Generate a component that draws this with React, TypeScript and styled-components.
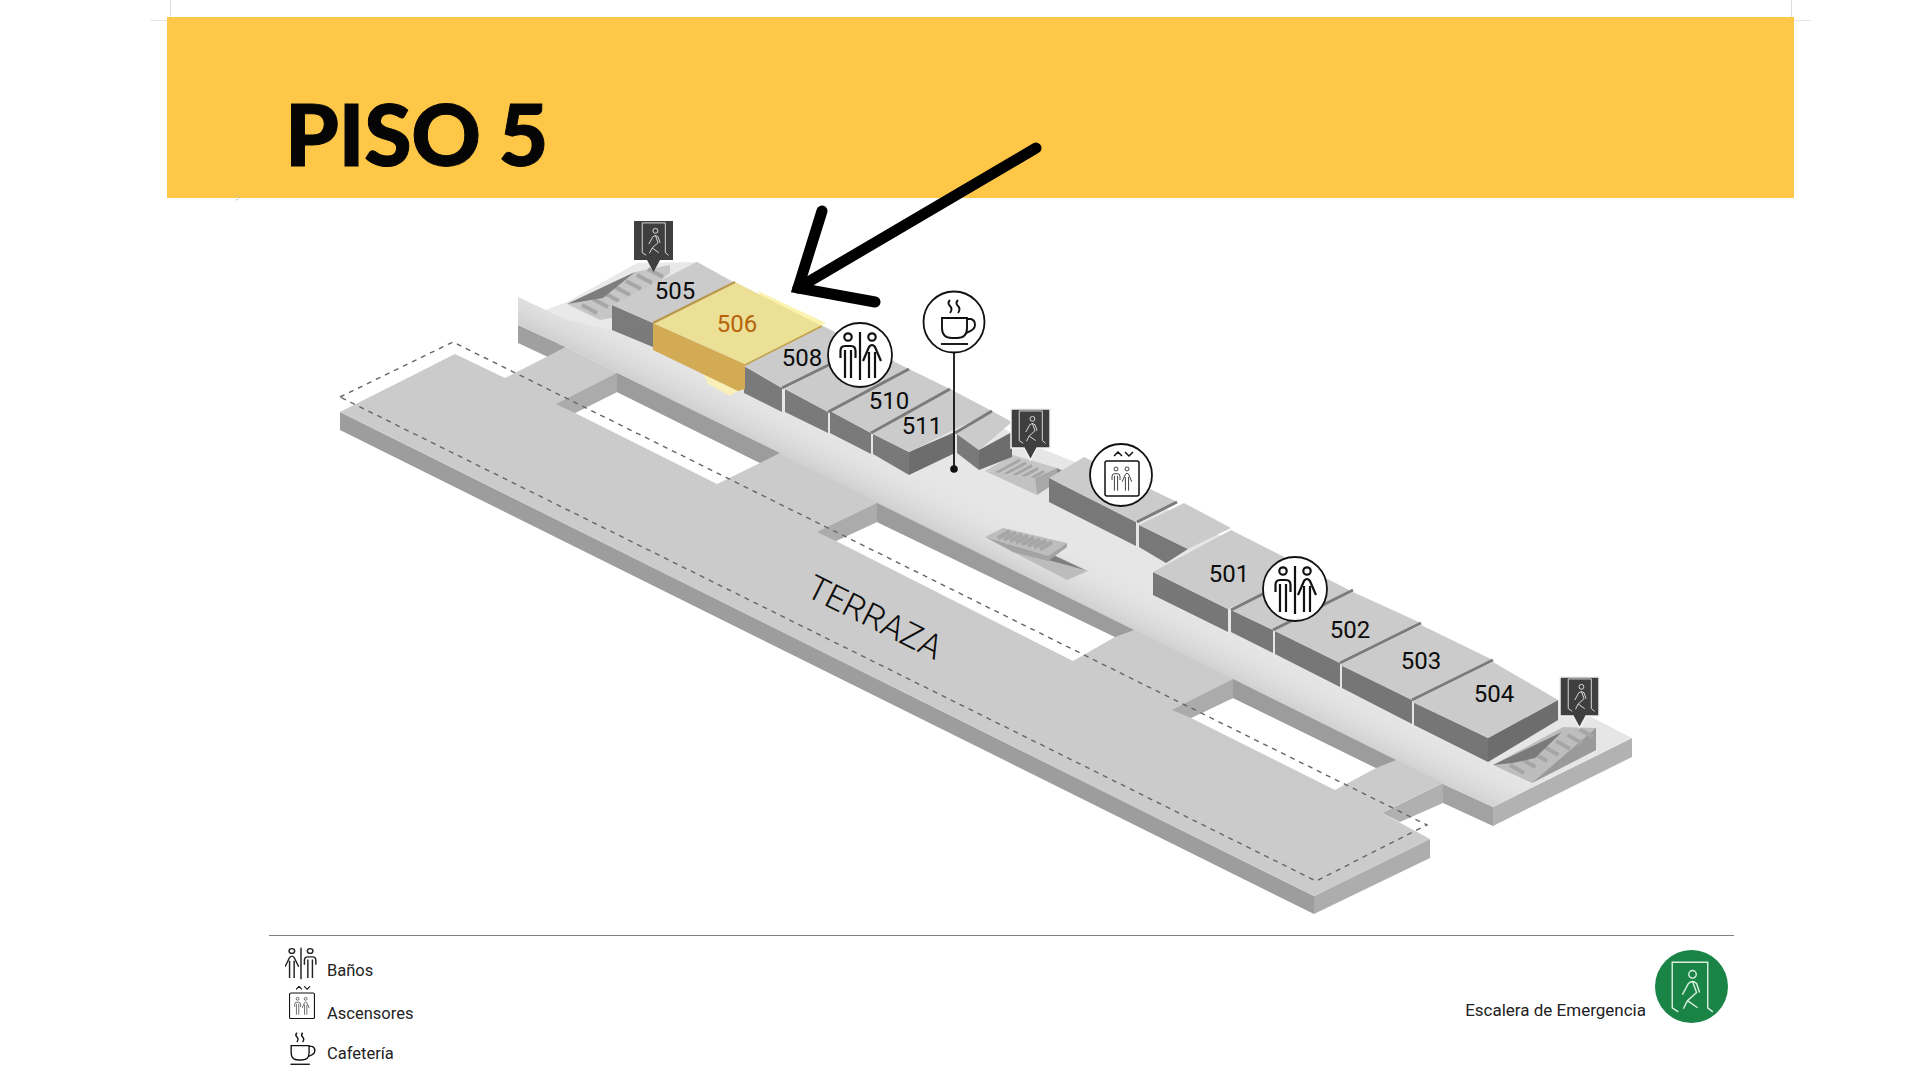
import styled, { createGlobalStyle } from 'styled-components';

const GlobalStyle = createGlobalStyle`
  html, body {
    margin: 0;
    padding: 0;
    background: #fff;
    font-family: Roboto, "Liberation Sans", sans-serif;
  }
`;

const Page = styled.div`
  position: relative;
  width: 1920px;
  height: 1080px;
  overflow: hidden;
  padding-top: 17px;
  box-sizing: border-box;
  background: #fff;
  &::before {
    content: '';
    position: absolute;
    left: 170px;
    top: 0;
    width: 1620px;
    height: 17px;
    border-left: 1px solid #dcdcdc;
    border-right: 1px solid #dcdcdc;
  }
  &::after {
    content: '';
    position: absolute;
    left: 150px;
    top: 20px;
    width: 1661px;
    height: 1px;
    background: #e6e6e6;
  }
`;

const Banner = styled.header`
  position: relative;
  z-index: 1;
  margin-left: 167px;
  width: 1627px;
  height: 181px;
  box-sizing: border-box;
  padding: 73px 0 0 118px;
  background: #fec748;
`;

const Title = styled.h1`
  margin: 0;
  font-family: Lato, "Open Sans", sans-serif;
  font-weight: 900;
  font-size: 86px;
  line-height: 86px;
  letter-spacing: -0.4px;
  word-spacing: -2px;
  -webkit-text-stroke: 1px #050505;
  color: #050505;
`;

const MapCanvas = styled.svg`
  position: relative;
  z-index: 2;
  display: block;
  width: 1920px;
  height: 737px;
  overflow: visible;
`;

const RoomLabel = styled.text<{ $accent?: boolean }>`
  font-family: Roboto, "Liberation Sans", sans-serif;
  font-size: 24px;
  text-anchor: middle;
  fill: ${(p) => (p.$accent ? '#b5640a' : '#0c0c0c')};
`;

const TerraceLabel = styled.text`
  font-family: Roboto, "Liberation Sans", sans-serif;
  font-size: 34px;
  font-weight: 300;
  text-anchor: middle;
  fill: #0c0c0c;
`;

const Footer = styled.footer`
  display: flex;
  justify-content: space-between;
  margin-left: 269px;
  width: 1465px;
  height: 145px;
  box-sizing: border-box;
  padding: 11px 6px 0 16px;
  border-top: 1px solid #808080;
`;

const Legend = styled.ul`
  display: flex;
  flex-direction: column;
  margin: 0;
  padding: 0;
  list-style: none;
`;

const LegendRow = styled.li<{ $top: number }>`
  display: flex;
  align-items: flex-end;
  margin-top: ${(p) => p.$top}px;
`;

const LegendIcon = styled.span<{ $inset?: number }>`
  display: flex;
  justify-content: center;
  width: 32px;
  box-sizing: border-box;
  padding-left: ${(p) => p.$inset ?? 0}px;
  svg {
    display: block;
  }
`;

const LegendText = styled.span<{ $drop: number }>`
  margin-left: 10px;
  margin-bottom: ${(p) => -p.$drop}px;
  font-size: 16.5px;
  line-height: 20px;
  color: #222;
`;

const ExitKey = styled.div`
  display: flex;
  align-items: flex-start;
  gap: 9px;
  padding-top: 3px;
`;

const ExitText = styled.span`
  margin-top: 50px;
  font-size: 17px;
  line-height: 20px;
  color: #222;
`;

const ExitBadge = styled.svg`
  display: block;
  width: 73px;
  height: 73px;
`;

type Wall = { top: string; left?: string; right?: string };

const backBlocks: Wall[] = [
  { top: '697,262 733,282 653,323 612,305', left: '612,305 653,323 653,347 612,330' },
  { top: '823,326 865,347 782,388 744,366', left: '744,366 782,388 782,412 744,393' },
  { top: '865,347 909,369 828,412 785,389', left: '785,389 828,412 828,433 785,412' },
  { top: '909,369 950,389 871,433 830,411', left: '830,411 871,433 871,454 830,433' },
  {
    top: '950,389 992,411 909,452 873,434',
    left: '873,434 909,452 909,475 873,454',
    right: '909,452 955,432 955,453 909,475',
  },
  {
    top: '992,411 1012,422 979,450 957,434',
    left: '957,434 979,450 979,470 957,453',
    right: '979,450 1012,432 1012,457 979,470',
  },
  { top: '1084,457 1177,502 1136,522 1049,478', left: '1049,478 1136,522 1136,546 1049,502' },
  { top: '1184,503 1231,528 1188,549 1139,525', left: '1139,525 1188,549 1166,563 1139,547' },
  { top: '1231,530 1310,570 1228,609 1153,572', left: '1153,572 1228,609 1228,632 1153,595' },
  { top: '1310,570 1353,592 1273,630 1231,610', left: '1231,610 1273,630 1273,653 1231,632' },
  { top: '1353,592 1421,623 1340,663 1273,630', left: '1275,631 1340,663 1340,687 1275,654' },
  { top: '1421,625 1493,660 1412,700 1340,665', left: '1342,665 1412,700 1412,724 1342,688' },
  {
    top: '1493,662 1558,700 1488,738 1412,702',
    left: '1414,702 1488,738 1488,762 1414,725',
    right: '1488,738 1558,700 1558,720 1488,762',
  },
];

const separators = [
  [782, 388, 865, 347],
  [828, 412, 909, 369],
  [871, 433, 950, 389],
  [955, 433, 992, 411],
  [1137, 522, 1177, 502],
  [1231, 610, 1310, 570],
  [1273, 630, 1353, 590],
  [1340, 663, 1421, 623],
  [1412, 700, 1493, 660],
];

const wells = [
  {
    side: '617,373 556,404 575,413 617,392',
    back: '617,373 617,392 760,463 780,453',
    hole: '575,413 617,392 760,463 717,484',
  },
  {
    side: '877,503 817,532 836,541 877,522',
    back: '877,503 877,522 1115,637 1134,630',
    hole: '836,541 877,522 1115,637 1073,661',
  },
  {
    side: '1233,679 1172,710 1191,718 1233,698',
    back: '1233,679 1233,698 1376,768 1396,760',
    hole: '1191,718 1233,698 1376,768 1335,790',
  },
];

const rooms: [string, number, number][] = [
  ['505', 675, 299],
  ['508', 802, 366],
  ['510', 889, 409],
  ['511', 922, 434],
  ['501', 1229, 582],
  ['502', 1350, 638],
  ['503', 1421, 669],
  ['504', 1494, 702],
];

const Steps = ({
  from,
  to,
  dx,
  dy,
  count,
  width = 4,
}: {
  from: number[];
  to: number[];
  dx: number;
  dy: number;
  count: number;
  width?: number;
}) => (
  <g stroke="#a6a6a6" strokeWidth={width}>
    {Array.from({ length: count }, (_, i) => (
      <line key={i} x1={from[0] + dx * i} y1={from[1] + dy * i} x2={to[0] + dx * i} y2={to[1] + dy * i} />
    ))}
  </g>
);

const Man = () => (
  <g>
    <circle cx={0} cy={-18} r={3.7} />
    <path d="M-7.5 3V-4Q-7.5 -9 -3 -9H3Q7.5 -9 7.5 -4V3M-3 -5V23M3 -5V23" />
  </g>
);

const Woman = () => (
  <g>
    <circle cx={0} cy={-18} r={3.7} />
    <path d="M-9 6L-3 -8Q0 -12 3 -8L9 6M-3 -3V23M3 -3V23" />
  </g>
);

const RestroomGlyph = ({ stroke = '#111', width = 2.2 }: { stroke?: string; width?: number }) => (
  <g fill="none" stroke={stroke} strokeWidth={width}>
    <path d="M0 -23V25" />
    <g transform="translate(-12 0)">
      <Man />
    </g>
    <g transform="translate(12 0)">
      <Woman />
    </g>
  </g>
);

const ElevatorGlyph = ({ width = 1.5 }: { width?: number }) => (
  <g fill="none" stroke="#111" strokeWidth={width}>
    <path d="M-7 -19L-3 -23L1 -19M4 -23L8 -19L12 -23" />
    <rect x={-16} y={-14} width={34} height={35} rx={2} />
    <g transform="translate(-5 3.5) scale(0.53)">
      <Man />
    </g>
    <g transform="translate(6 3.5) scale(0.53)">
      <Woman />
    </g>
  </g>
);

const CoffeeGlyph = ({ width = 1.9 }: { width?: number }) => (
  <g fill="none" stroke="#111" strokeWidth={width}>
    <path d="M-4 -22Q-7 -19 -4 -16T-4 -9M4 -22Q1 -19 4 -16T4 -9" />
    <path d="M-12 -4H13V6Q13 16 3 16H-2Q-12 16 -12 6Z" />
    <path d="M13 -3H17Q21 -2 21 3Q21 8 12 11" />
    <path d="M-13 22H14" />
  </g>
);

const ExitFigure = ({ stroke }: { stroke: string }) => (
  <g fill="none" stroke={stroke} strokeWidth={1.4}>
    <path d="M23 61L17 57V12H52V57L57 61" />
    <circle cx={37} cy={24} r={3.7} />
    <path d="M27 44L33 33Q37 29 41 33L44 42M37 31L41 42L32 50L28 58M32 50L42 57" />
  </g>
);

const ExitSign = ({ x, y, outlined }: { x: number; y: number; outlined?: boolean }) => (
  <g transform={`translate(${x} ${y})`}>
    <path
      d="M0 0H39V39H26L19.5 51L13 39H0Z"
      fill="#3f3f3f"
      stroke={outlined ? '#f2f2f2' : 'none'}
      strokeWidth={outlined ? 1.5 : 0}
    />
    <g transform="translate(-3 -6) scale(0.66)">
      <ExitFigure stroke="#e4e4e4" />
    </g>
  </g>
);

const Marker = ({ x, y, r, children }: { x: number; y: number; r: number; children: React.ReactNode }) => (
  <g transform={`translate(${x} ${y})`}>
    <circle r={r} fill="#fff" stroke="#111" strokeWidth={1.8} />
    {children}
  </g>
);

const FloorPlan = () => (
  <MapCanvas viewBox="0 198 1920 737">
    <defs>
      <linearGradient id="deck" gradientUnits="userSpaceOnUse" x1={1000} y1={564} x2={1020} y2={524}>
        <stop offset="0" stopColor="#d0d0d0" />
        <stop offset="0.35" stopColor="#dcdcdc" />
        <stop offset="0.7" stopColor="#e3e3e3" />
        <stop offset="1" stopColor="#e6e6e6" />
      </linearGradient>
      <linearGradient id="blockWall" gradientUnits="userSpaceOnUse" x1={0} y1={0} x2={0} y2={1000}>
        <stop offset="0" stopColor="#7f7f7f" />
        <stop offset="1" stopColor="#727272" />
      </linearGradient>
    </defs>

    <path d="M235 195L240 198L234 201" fill="none" stroke="#bbb" strokeDasharray="2 2" />

    {/* slab walls */}
    <polygon points="340,412 1314,896 1314,914 340,430" fill="#9d9d9d" />
    <polygon points="1314,896 1430,839 1430,858 1314,914" fill="#adadad" />
    <polygon points="518,325 566,347 548,357 518,343" fill="#a0a0a0" />
    <polygon points="1493,807 1632,738 1632,757 1493,826" fill="#b2b2b2" />
    <polygon points="1443,784 1493,807 1493,826 1443,803" fill="#a2a2a2" />
    <polygon points="1443,783 1382,813 1400,822 1443,803" fill="#b0b0b0" />

    {/* corridor deck */}
    <polygon points="518,297 545,310 567,302 637,263 697,262 612,330 560,345" fill="#e9e9e9" />
    <polygon
      points="518,325 518,297 567,320 612,330 697,262 1012,433 1020,440 1075,462 1188,520 1558,700 1632,738 1493,807 1443,784 566,347"
      fill="url(#deck)"
    />

    {/* terrace */}
    <polygon
      points="340,412 455,354 505,378 566,347 1443,783 1382,813 1430,839 1314,896"
      fill="#cbcbcb"
    />
    {wells.map((well) => (
      <g key={well.hole}>
        <polygon points={well.hole} fill="#fff" />
        <polygon points={well.side} fill="#ababab" />
        <polygon points={well.back} fill="#9c9c9c" />
      </g>
    ))}
    <polygon
      points="340,397 453,342 1427,825 1316,881"
      fill="none"
      stroke="#666"
      strokeWidth={1.4}
      strokeDasharray="5 5"
    />

    {/* stairs */}
    <polygon points="567,304 635,272 670,265 670,273 612,318 600,320" fill="#c6c6c6" />
    <Steps from={[582, 305]} to={[597, 313]} dx={11} dy={-6} count={7} />
    <polygon points="567,304 635,272 603,298 585,301" fill="#7d7d7d" />

    <polygon points="985,471 1013,455 1057,468 1035,478" fill="#c6c6c6" />
    <Steps from={[996, 473]} to={[1020, 460]} dx={6} dy={2.8} count={7} width={3} />
    <polygon points="1035,478 1057,468 1057,482 1037,495" fill="#a8a8a8" />
    <polygon points="985,471 1035,478 1037,495" fill="#c2c2c2" />
    <polygon points="1057,468 1065,472 1057,478" fill="#8a8a8a" />

    <polygon points="1013,547 1048,552 1088,571 1067,580 1013,552" fill="#bcbcbc" />
    <polygon points="1053,555 1085,570 1048,560" fill="#7f7f7f" />
    <polygon points="985,537 1003,528 1067,543 1048,556" fill="#bdbdbd" />
    <Steps from={[998, 538]} to={[1010, 531]} dx={6} dy={1.6} count={8} />
    <polygon points="985,537 1048,556 1067,543 1067,547 1048,561 1013,552" fill="#a3a3a3" />

    <polygon points="1493,765 1563,727 1596,728 1596,750 1532,783" fill="#bdbdbd" />
    <polygon points="1596,728 1596,750 1532,783" fill="#9a9a9a" />
    <Steps from={[1510, 765]} to={[1524, 773]} dx={11.5} dy={-6} count={7} />
    <polygon points="1493,765 1562,732 1535,758 1513,763" fill="#7a7a7a" />

    {/* rooms */}
    {backBlocks.map((block) => (
      <g key={block.top}>
        {block.left && <polygon points={block.left} fill="url(#blockWall)" />}
        {block.right && <polygon points={block.right} fill="#6d6d6d" />}
        <polygon points={block.top} fill="#cbcbcb" />
      </g>
    ))}
    {separators.map(([x1, y1, x2, y2]) => (
      <line key={x1} x1={x1} y1={y1} x2={x2} y2={y2} stroke="#7b7b7b" strokeWidth={3} />
    ))}

    {/* highlighted room */}
    <polygon points="758,291 826,323 790,342" fill="#fbf3b0" />
    <polygon points="700,367 742,388 730,396 708,384" fill="#f8f0b8" />
    <polygon points="653,323 745,364 745,389 738,391 653,350" fill="#d4ab55" />
    <polygon points="735,282 822,326 745,364 653,323" fill="#ecdf96" />
    <polyline points="653,323 735,282" fill="none" stroke="#b8964a" strokeWidth={2} />
    <polyline points="745,365 822,326" fill="none" stroke="#c0a048" strokeWidth={1.5} />

    {rooms.map(([room, x, y]) => (
      <RoomLabel key={room} x={x} y={y}>
        {room}
      </RoomLabel>
    ))}
    <RoomLabel $accent x={737} y={332}>
      506
    </RoomLabel>
    <TerraceLabel x={875} y={629} transform="rotate(26.5 875 617)">
      TERRAZA
    </TerraceLabel>

    {/* markers */}
    <ExitSign x={634} y={221} />
    <ExitSign x={1011} y={409} outlined />
    <ExitSign x={1560} y={677} outlined />

    <Marker x={860} y={355} r={32}>
      <RestroomGlyph />
    </Marker>
    <line x1={954} y1={353} x2={954} y2={469} stroke="#111" strokeWidth={1.8} />
    <circle cx={954} cy={469} r={3.8} fill="#111" />
    <Marker x={954} y={322} r={30.5}>
      <CoffeeGlyph />
    </Marker>
    <Marker x={1121} y={475} r={31}>
      <ElevatorGlyph />
    </Marker>
    <Marker x={1295} y={589} r={32}>
      <RestroomGlyph />
    </Marker>

    {/* arrow */}
    <g fill="none" stroke="#000" strokeWidth={11} strokeLinecap="round" strokeLinejoin="miter">
      <path d="M1036 148L798 288" />
      <path d="M822 211L798 288L875 302" />
    </g>
  </MapCanvas>
);

const App = () => (
  <Page>
    <GlobalStyle />
    <Banner>
      <Title>PISO 5</Title>
    </Banner>
    <FloorPlan />
    <Footer>
      <Legend>
        <LegendRow $top={0}>
          <LegendIcon>
            <svg width={32} height={33} viewBox="-21 -24 42 50" preserveAspectRatio="none">
              <g transform="scale(-1 1)">
                <RestroomGlyph stroke="#222" width={1.9} />
              </g>
            </svg>
          </LegendIcon>
          <LegendText $drop={1}>Baños</LegendText>
        </LegendRow>
        <LegendRow $top={6}>
          <LegendIcon $inset={2}>
            <svg width={26} height={33} viewBox="-16.5 -23.5 35 45">
              <ElevatorGlyph />
            </svg>
          </LegendIcon>
          <LegendText $drop={5}>Ascensores</LegendText>
        </LegendRow>
        <LegendRow $top={13}>
          <LegendIcon $inset={4}>
            <svg width={26} height={33} viewBox="-13 -23 35 46">
              <CoffeeGlyph />
            </svg>
          </LegendIcon>
          <LegendText $drop={-1}>Cafetería</LegendText>
        </LegendRow>
      </Legend>
      <ExitKey>
        <ExitText>Escalera de Emergencia</ExitText>
        <ExitBadge viewBox="0 0 72 72">
          <circle cx={36} cy={36} r={36} fill="#1a8447" />
          <ExitFigure stroke="#d8efdf" />
        </ExitBadge>
      </ExitKey>
    </Footer>
  </Page>
);

export default App;
